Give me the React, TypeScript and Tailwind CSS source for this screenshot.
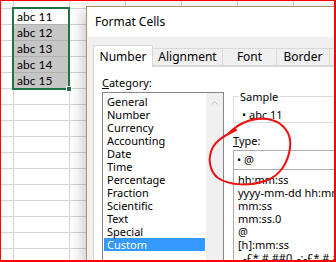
const categories = [
  'General',
  'Number',
  'Currency',
  'Accounting',
  'Date',
  'Time',
  'Percentage',
  'Fraction',
  'Scientific',
  'Text',
  'Special',
  'Custom',
]

const types = [
  'hh:mm:ss',
  'yyyy-mm-dd hh:mm',
  'mm:ss',
  'mm:ss.0',
  '@',
  '[h]:mm:ss',
  '_-£* #,##0_-;-£* #,##0_-;_-£* "-"_-;_-@_-',
]

const tabs = ['Alignment', 'Font', 'Border']
const tabWidths: Record<string, string> = { Alignment: 'w-[70px]', Font: 'w-[54px]', Border: 'w-[53px]' }

function Sheet() {
  const cells = ['abc 11', 'abc 12', 'abc 13', 'abc 14', 'abc 15']
  return (
    <div className="h-full w-full bg-white bg-[linear-gradient(to_right,#d4d4d4_1px,transparent_1px),linear-gradient(to_bottom,#d4d4d4_1px,transparent_1px)] bg-[length:56px_16px] bg-[position:13px_8px] pt-[7px] pl-[12px]">
      <div className="relative w-[58px] border-2 border-[#217346]" style={{ fontFamily: 'Lato, sans-serif' }}>
        {cells.map((c, i) => (
          <div
            key={c}
            className={
              i === 0
                ? 'h-[15px] bg-white pl-[3px] text-[12px] leading-[15px] text-black'
                : 'h-[16px] border-t border-[#b0b0b0] bg-[#c6c6c6] pl-[3px] text-[12px] leading-[15px] text-black'
            }
          >
            {c}
          </div>
        ))}
        <div className="absolute -right-[4px] -bottom-[4px] h-[6px] w-[6px] border border-white bg-[#217346]" />
      </div>
    </div>
  )
}

function Dialog() {
  return (
    <div
      className="absolute left-[86px] top-[6px] h-[270px] w-[270px] border-l border-t border-[#ab9068] bg-[#f0f0f0] text-[11px] text-black shadow-[-3px_4px_14px_rgba(0,0,0,0.22)]"
      style={{ fontFamily: '"Noto Sans", "Open Sans", sans-serif' }}
    >
      <div className="flex h-[30px] items-center bg-white pl-[8px] text-[12px]">Format Cells</div>

      <div className="pl-[6px] pt-[8px]">
        <div className="flex items-end">
          <div className="relative z-10 -mb-px flex h-[22px] w-[60px] items-start justify-center border border-b-0 border-[#d9d9d9] bg-white pt-[2px] text-[12px]">
            Number
          </div>
          {tabs.map((t) => (
            <div
              key={t}
              className={`flex h-[18px] ${tabWidths[t]} items-center justify-center border border-l-0 border-[#d9d9d9] bg-[#f0f0f0] text-[12px]`}
            >
              {t}
            </div>
          ))}
          <div className="h-[18px] w-[20px] border border-l-0 border-[#d9d9d9]" />
        </div>

        <div className="flex h-[200px] border-l border-t border-[#d9d9d9] bg-white">
          <div className="pl-[8px] pt-[8px]">
            <div className="h-[17px] leading-[15px]">
              <span className="underline">C</span>ategory:
            </div>
            <div className="flex h-[200px] w-[122px] border border-[#828790]">
              <div className="flex-1 px-px pt-[2px]">
                {categories.map((c) => (
                  <div
                    key={c}
                    className={
                      c === 'Custom'
                        ? 'h-[13px] bg-[#3399ff] pl-[3px] leading-[13px] text-white'
                        : 'h-[13px] pl-[3px] leading-[13px]'
                    }
                  >
                    {c}
                  </div>
                ))}
              </div>
              <div className="flex w-[17px] justify-center bg-[#f0f0f0] pt-[8px]">
                <svg width="7" height="4" viewBox="0 0 7 4">
                  <polyline points="0.5,3.5 3.5,0.5 6.5,3.5" fill="none" stroke="#c2c2c2" strokeWidth="1" />
                </svg>
              </div>
            </div>
          </div>

          <div className="ml-[9px] flex-1 pt-[22px]">
            <fieldset className="h-[34px] border border-[#dcdcdc] pl-[5px]">
              <legend className="px-px leading-[15px]">Sample</legend>
              <div className="mt-[4px] pl-[3px] leading-[13px]">• abc 11</div>
            </fieldset>
            <div className="mt-[10px] h-[17px] leading-[15px]">
              <span className="underline">T</span>ype:
            </div>
            <div className="h-[20px] border border-[#abadb3] pl-[3px] leading-[18px]">• @</div>
            <div className="h-[120px] overflow-hidden whitespace-nowrap border border-t-0 border-[#abadb3] pl-[4px] pt-[3px]">
              {types.map((t) => (
                <div key={t} className="h-[13px] leading-[13px]">
                  {t}
                </div>
              ))}
            </div>
          </div>
        </div>
      </div>
    </div>
  )
}

export default function App() {
  return (
    <div className="relative h-[262px] w-[336px] overflow-hidden bg-white">
      <Sheet />
      <Dialog />
      <svg className="pointer-events-none absolute left-0 top-0" width="336" height="262" viewBox="0 0 336 262">
        <path
          d="M228 134 C 238 124, 252 117, 268 119 C 284 122, 292 134, 290 148 C 288 163, 280 176, 265 181 C 250 186, 230 186, 218 178 C 208 170, 208 156, 213 147 C 217 140, 224 136, 236 130"
          fill="none"
          stroke="#ee1111"
          strokeWidth="2"
          strokeLinecap="round"
        />
      </svg>
      <div className="pointer-events-none absolute inset-0 border-b-2 border-l border-r-2 border-t border-[#ff0000]" />
    </div>
  )
}
